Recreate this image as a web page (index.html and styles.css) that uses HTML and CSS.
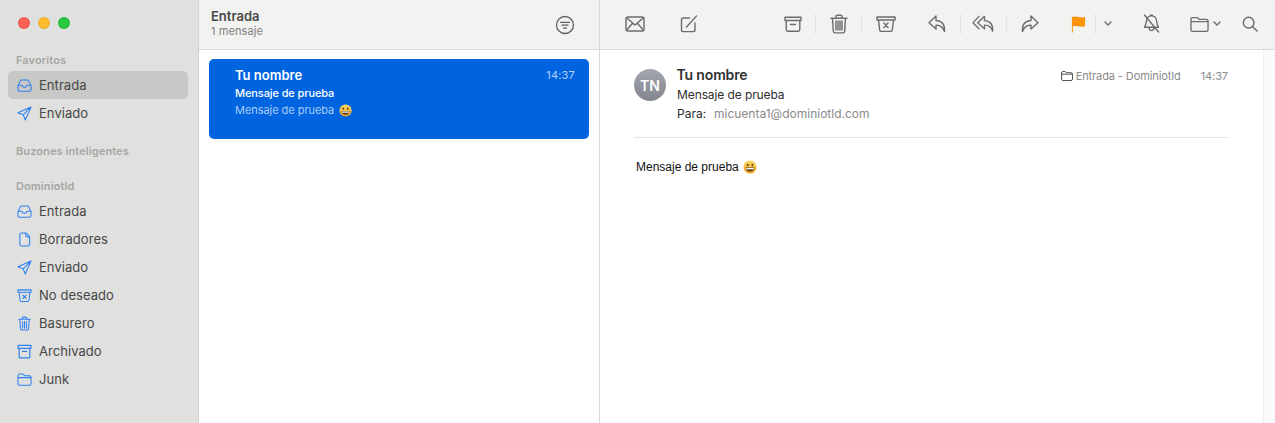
FILE: index.html
```html
<!DOCTYPE html>
<html lang="es">
<head>
<meta charset="utf-8">
<title>Mail</title>
<link rel="stylesheet" href="styles.css">
</head>
<body>
<svg class="defs" width="0" height="0" aria-hidden="true">
  <symbol id="i-inbox" viewBox="0 0 16 14"><path d="M1 7.500 3.400 2.300Q3.900 1.200 5 1.200h6q1.100 0 1.600 1.100L15 7.500v3.700q0 2-2 2H3q-2 0-2-2zM1 6.800h3.800q.8 0 1 .8.400 1.400 2.200 1.400t2.200-1.400q.2-.8 1-.8H15"/></symbol>
  <symbol id="i-send" viewBox="0 0 16 16"><path d="M15 1 1 7.200l5.600 2.200 2.200 5.600zM15 1 6.600 9.400"/></symbol>
  <symbol id="i-doc" viewBox="0 0 14 16"><path d="M2 3q0-2 2-2h4.500L12.500 5v8q0 2-2 2H4q-2 0-2-2zM8.300 1v2.500q0 1.700 1.700 1.700h2.500"/></symbol>
  <symbol id="i-junk" viewBox="0 0 16 14"><path d="M1 1h14v2.600H1zM2.200 3.600 3.200 12q.15 1.300 1.500 1.300h6.600q1.350 0 1.500-1.300l1-8.400M6.200 6.500l3.600 3.800M9.800 6.500l-3.600 3.800"/></symbol>
  <symbol id="i-trash" viewBox="0 0 14 16"><path d="M1 3.500h12M4.800 3.500V2.300q0-1.100 1.100-1.100h2.200q1.100 0 1.100 1.100v1.200M2 3.500 2.700 13.500q.1 1.500 1.600 1.500h5.400q1.500 0 1.600-1.500L12 3.500M5 6v6.800M7 6v6.800M9 6v6.800"/></symbol>
  <symbol id="i-archive" viewBox="0 0 14 14"><path d="M1 1.200h12v2.800H1zM2 4v7.800q0 1.200 1.200 1.200h7.600q1.200 0 1.200-1.200V4M5 6.800h4"/></symbol>
  <symbol id="i-folder" viewBox="0 0 16 14"><path d="M1 3q0-1.800 1.800-1.800h3q.9 0 1.400.7l.8 1.100h5.200q1.800 0 1.800 1.800v6.600q0 1.800-1.800 1.800H2.800Q1 13.200 1 11.400zM1 5h14"/></symbol>
  <symbol id="i-smile" viewBox="0 0 16 16"><defs><linearGradient id="g-face" x1="0" y1="0" x2="0" y2="1"><stop offset="0" stop-color="#fbd960"/><stop offset="1" stop-color="#eda22c"/></linearGradient></defs><circle cx="8" cy="8" r="7.500" fill="url(#g-face)"/><ellipse cx="5.300" cy="5.700" rx="1" ry="1.300" fill="#5b3a12"/><ellipse cx="10.700" cy="5.700" rx="1" ry="1.300" fill="#5b3a12"/><path d="M3 8.600h10q-.3 4.600-5 4.600T3 8.600z" fill="#5b3a12"/><path d="M3.700 9.200h8.600v1.500H3.700z" fill="#fff"/></symbol>
</svg>

<div class="window">
  <aside class="sidebar">
    <div class="lights">
      <span class="dot dot-red"></span>
      <span class="dot dot-yellow"></span>
      <span class="dot dot-green"></span>
    </div>
    <h2 class="side-head head-fav">Favoritos</h2>
    <ul class="side-list">
      <li class="side-item is-active"><svg class="side-icon"><use href="#i-inbox"/></svg>Entrada</li>
      <li class="side-item"><svg class="side-icon"><use href="#i-send"/></svg>Enviado</li>
    </ul>
    <h2 class="side-head head-smart">Buzones inteligentes</h2>
    <h2 class="side-head head-domain">DominiotId</h2>
    <ul class="side-list">
      <li class="side-item"><svg class="side-icon"><use href="#i-inbox"/></svg>Entrada</li>
      <li class="side-item"><svg class="side-icon"><use href="#i-doc"/></svg>Borradores</li>
      <li class="side-item"><svg class="side-icon"><use href="#i-send"/></svg>Enviado</li>
      <li class="side-item"><svg class="side-icon"><use href="#i-junk"/></svg>No deseado</li>
      <li class="side-item"><svg class="side-icon"><use href="#i-trash"/></svg>Basurero</li>
      <li class="side-item"><svg class="side-icon"><use href="#i-archive"/></svg>Archivado</li>
      <li class="side-item"><svg class="side-icon"><use href="#i-folder"/></svg>Junk</li>
    </ul>
  </aside>

  <section class="list">
    <header class="list-head">
      <div class="list-titles">
        <div class="list-title">Entrada</div>
        <div class="list-count">1 mensaje</div>
      </div>
      <svg class="filter" viewBox="0 0 20 20"><circle cx="10" cy="10" r="8.500"/><path d="M5.500 7.300h9M7 10.200h6M8.500 13.100h3"/></svg>
    </header>
    <article class="card">
      <div class="card-top"><span class="card-from">Tu nombre</span><span class="card-time">14:37</span></div>
      <div class="card-subject">Mensaje de prueba</div>
      <div class="card-preview">Mensaje de prueba <svg class="emoji-small"><use href="#i-smile"/></svg></div>
    </article>
  </section>

  <main class="pane">
    <nav class="toolbar">
      <svg class="tool t-mail" viewBox="0 0 20 16"><rect x="1" y="1" width="18" height="14" rx="1.800"/><path d="M1.500 1.800 10 9l8.500-7.200M1.500 14.300l6-7M18.500 14.300l-6-7"/></svg>
      <svg class="tool t-compose" viewBox="0 0 18 18"><path d="M9.500 3H3.300Q1.500 3 1.500 4.800v10q0 1.800 1.800 1.800h9.900q1.800 0 1.800-1.800V8"/><path d="M6.500 12 16.600.9"/></svg>
      <svg class="tool t-archive" viewBox="0 0 18 16"><path d="M1 1.200h16v3.300H1zM2.200 4.500v9q0 1.700 1.700 1.700h10.200q1.700 0 1.700-1.700v-9M6.500 8.500h5"/></svg>
      <span class="sep sep-a"></span>
      <svg class="tool t-trash" viewBox="0 0 18 20"><path d="M1 4.200h16M6 4.200V2.500q0-1.300 1.300-1.300h3.400q1.300 0 1.300 1.300v1.700M2.500 4.200l.8 13q.1 1.700 1.800 1.700h7.800q1.700 0 1.800-1.700l.8-13M6 7v9M8 7v9M10 7v9M12 7v9"/></svg>
      <span class="sep sep-b"></span>
      <svg class="tool t-junk" viewBox="0 0 20 16"><path d="M1 1h18v3H1zM2.500 4l1.200 10q.2 1.500 1.700 1.500h9.200q1.500 0 1.700-1.500L17.500 4M8 7l4 4.500M12 7l-4 4.500"/></svg>
      <svg class="tool t-reply" viewBox="0 0 18 18"><path d="M8 1 1 7.800 8 14v-3.700q6-.6 8.500 6.200.8-10.500-8.500-11z"/></svg>
      <span class="sep sep-c"></span>
      <svg class="tool t-replyall" viewBox="0 0 24 18"><path d="M7.300 1 1 7.800 7.300 14M13 1 6 7.800l7 6.200v-3.700q6-.6 8.500 6.200.8-10.500-8.500-11z"/></svg>
      <span class="sep sep-d"></span>
      <svg class="tool t-forward" viewBox="0 0 18 18"><path d="M10 1l7 6.800L10 14v-3.700q-6-.6-8.500 6.200Q.7 6 10 5.500z"/></svg>
      <svg class="tool t-flag" viewBox="0 0 16 18"><path d="M1 1.500q3-1 7 0t7 0v10q-3 1-7 0-4-1-6 0V18H1z"/></svg>
      <span class="sep sep-e"></span>
      <svg class="tool t-chev1" viewBox="0 0 8 5"><path d="M1 1l3 3 3-3"/></svg>
      <svg class="tool t-bell" viewBox="0 0 18 20"><path d="M9 2q5 0 5.500 6 .2 3 2 6H1.500q1.800-3 2-6Q4 2 9 2zM7.800 2q0-1.200 1.200-1.200T10.200 2M6.500 14.500q.1 3 2.500 3t2.500-3M1.500 1 16.500 19"/></svg>
      <svg class="tool t-folder" viewBox="0 0 20 16"><path d="M1 3.200q0-2 2-2h4q1 0 1.500.7l.9 1.300H17q2 0 2 2v8.600q0 2-2 2H3q-2 0-2-2zM1 5.500h18"/></svg>
      <svg class="tool t-chev2" viewBox="0 0 8 5"><path d="M1 1l3 3 3-3"/></svg>
      <svg class="tool t-search" viewBox="0 0 18 18"><circle cx="7.500" cy="7.500" r="6"/><path d="M12 12l5 5"/></svg>
    </nav>
    <div class="pane-body">
      <div class="message">
        <div class="msg-head">
          <div class="avatar">TN</div>
          <div class="msg-meta">
            <div class="msg-from">Tu nombre</div>
            <div class="msg-subject">Mensaje de prueba</div>
            <div class="msg-to"><span class="to-label">Para:</span><span class="to-addr">micuenta1@dominiotld.com</span></div>
          </div>
          <div class="msg-place">
            <svg class="place-icon" viewBox="0 0 12 10"><path d="M.5 2q0-1.500 1.500-1.500h2.200l1 1.200H10q1.500 0 1.500 1.500v4.800q0 1.500-1.500 1.500H2Q.5 9.500.5 8zM.5 3.200h11"/></svg>
            <span class="place-name">Entrada - DominiotId</span>
            <span class="place-time">14:37</span>
          </div>
        </div>
        <div class="msg-text">Mensaje de prueba <svg class="emoji-body"><use href="#i-smile"/></svg></div>
      </div>
      <div class="gutter"></div>
    </div>
  </main>
</div>
</body>
</html>
```
FILE: styles.css
```css
* { box-sizing: border-box; }
html, body { margin: 0; height: 100%; overflow: hidden; }
body { font-family: Inter, "Liberation Sans", sans-serif; background: #fff; }
.defs { position: absolute; }
.window { display: flex; width: 1275px; height: 423px; }

/* sidebar */
.sidebar { width: 199px; flex: none; background: #e0e0de; border-right: 1px solid #d2d2d0; padding: 17px 10px 0 8px; }
.lights { display: flex; gap: 8px; padding-left: 10px; height: 12px; }
.dot { width: 12px; height: 12px; border-radius: 50%; border: 1px solid rgba(0,0,0,.08); }
.dot-red { background: #fe5f57; }
.dot-yellow { background: #febc2e; }
.dot-green { background: #28c840; }
.side-head { margin: 0; padding-left: 8px; font-size: 11px; line-height: 14px; font-weight: 600; color: #a6a6a5; letter-spacing: .1px; }
.head-fav { margin-top: 24px; margin-bottom: 4px; }
.head-smart { margin-top: 17px; }
.head-domain { margin-top: 21px; margin-bottom: 4px; }
.side-list { list-style: none; margin: 0; padding: 0; }
.side-item { display: flex; align-items: center; height: 28px; padding-left: 9px; font-size: 13px; color: #474747; border-radius: 5px; letter-spacing: .05px; }
.side-item.is-active { background: #c8c8c6; }
.side-icon { width: 15px; height: 15px; margin-right: 7px; fill: none; stroke: #2d80f0; stroke-width: 1.100; stroke-linejoin: round; stroke-linecap: round; }

/* message list */
.list { width: 401px; flex: none; border-right: 1px solid #d9d9d9; background: #fff; }
.list-head { display: flex; align-items: center; justify-content: space-between; height: 50px; background: #f2f2f1; border-bottom: 1px solid #d9d9d8; padding: 0 24px 3px 12px; }
.list-title { font-size: 13px; line-height: 16px; font-weight: 600; color: #4a4a4a; }
.list-count { font-size: 11px; line-height: 14px; color: #808080; letter-spacing: .1px; }
.filter { width: 20px; height: 20px; margin-top: 3px; fill: none; stroke: #5f5f5f; stroke-width: 1.300; stroke-linecap: round; }
.card { margin: 9px 10px 0 10px; height: 80px; border-radius: 5px; background: #0064e1; padding: 7px 14px 0 26px; }
.card-top { display: flex; justify-content: space-between; align-items: center; height: 17px; }
.card-from { font-size: 13px; font-weight: 600; color: #fff; }
.card-time { font-size: 11px; color: #b4d1f7; letter-spacing: .2px; }
.card-subject { margin-top: 2px; font-size: 11px; line-height: 17px; font-weight: 500; color: #fff; letter-spacing: -.1px; }
.card-preview { display: flex; align-items: center; font-size: 11px; line-height: 17px; color: #a9cbf7; letter-spacing: -.05px; }
.emoji-small { width: 13px; height: 13px; margin-left: 5px; }

/* reading pane */
.pane { flex: 1; min-width: 0; display: flex; flex-direction: column; }
.toolbar { display: flex; align-items: center; height: 50px; flex: none; background: #f2f2f1; border-bottom: 1px solid #d9d9d8; padding-bottom: 2px; }
.tool { flex: none; fill: none; stroke: #6c6c6c; stroke-width: 1.400; stroke-linejoin: round; stroke-linecap: round; }
.sep { flex: none; width: 1px; height: 20px; background: #e2e2e1; }
.t-mail { width: 20px; height: 16px; margin-left: 25px; }
.t-compose { width: 18px; height: 18px; margin-left: 35px; }
.t-archive { width: 18px; height: 16px; margin-left: 86px; }
.sep-a { margin-left: 13px; }
.t-trash { width: 18px; height: 20px; margin-left: 14px; }
.sep-b { margin-left: 13px; }
.t-junk { width: 20px; height: 16px; margin-left: 14px; }
.t-reply { width: 18px; height: 18px; margin-left: 32px; }
.sep-c { margin-left: 14px; }
.t-replyall { width: 23px; height: 18px; margin-left: 11px; }
.sep-d { margin-left: 11px; }
.t-forward { width: 18px; height: 18px; margin-left: 14px; }
.t-flag { width: 15px; height: 18px; margin-left: 32px; fill: #fb9406; stroke: none; }
.sep-e { margin-left: 9px; }
.t-chev1 { width: 8px; height: 5px; margin-left: 8px; }
.t-bell { width: 17px; height: 19px; margin-left: 31px; }
.t-folder { width: 19px; height: 16px; margin-left: 30px; }
.t-chev2 { width: 8px; height: 5px; margin-left: 4px; }
.t-search { width: 16px; height: 16px; margin-left: 21px; stroke-width: 1.600; }

.pane-body { flex: 1; display: flex; min-height: 0; }
.message { flex: 1; min-width: 0; padding: 0 34px 0 34px; }
.gutter { width: 12px; flex: none; background: #fafafa; border-left: 1px solid #f0f0f0; }
.msg-head { display: flex; height: 88px; padding-top: 15px; border-bottom: 1px solid #e3e3e3; }
.avatar { width: 32px; height: 32px; flex: none; margin-top: 4px; border-radius: 50%; background: linear-gradient(#a3a6af, #83868f); color: #fff; font-size: 14px; font-weight: 600; display: flex; align-items: center; justify-content: center; }
.msg-meta { margin-left: 11px; flex: 1; }
.msg-from { font-size: 14px; line-height: 20px; font-weight: 600; color: #303030; letter-spacing: -.15px; margin-left: -.5px; }
.msg-subject { font-size: 12px; line-height: 19px; color: #2e2e2e; letter-spacing: -.1px; }
.msg-to { display: flex; font-size: 12px; line-height: 19px; color: #2e2e2e; }
.to-label { width: 37px; }
.to-addr { color: #8a8a8a; }
.msg-place { display: flex; align-items: center; height: 20px; margin-top: 1px; font-size: 11px; color: #8a8a8a; margin-right: 1px; letter-spacing: -.1px; }
.place-icon { width: 12px; height: 10px; margin-right: 3px; fill: none; stroke: #555; stroke-width: 1; }
.place-time { margin-left: 20px; }
.msg-text { display: flex; align-items: center; margin-top: 20px; padding-left: 2px; font-family: "Liberation Sans", Arial, sans-serif; font-size: 12px; line-height: 18px; color: #111; }
.emoji-body { width: 14px; height: 14px; margin-left: 4px; }
```
